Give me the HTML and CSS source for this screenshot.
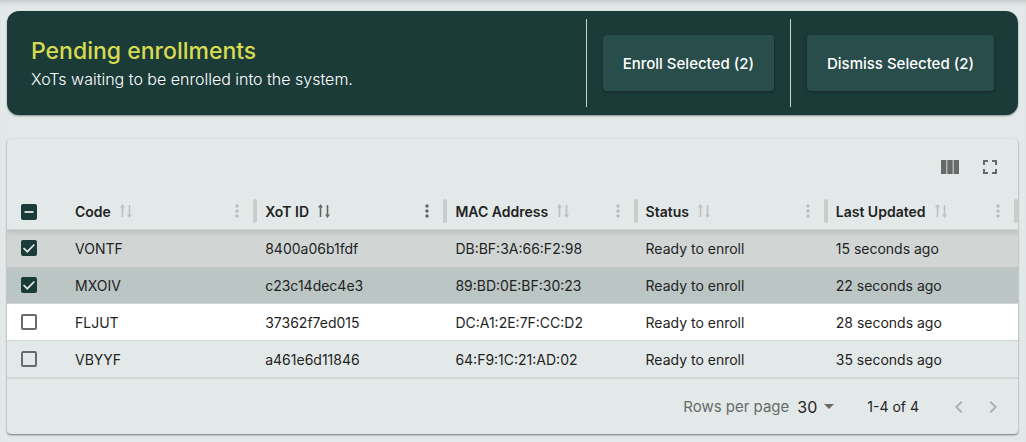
FILE: index.html
```html
<!DOCTYPE html>
<html lang="en">
<head>
  <meta charset="UTF-8">
  <meta name="viewport" content="width=device-width, initial-scale=1">
  <title>Pending enrollments</title>
  <link rel="stylesheet" href="styles.css">
</head>
<body>

  <!-- Shared icons -->
  <svg class="sprite" aria-hidden="true">
    <symbol id="sort" viewBox="0 0 16 16">
      <path d="M4.5 14V3M11.5 2v11" fill="none" stroke="currentColor" stroke-width="1.6"/>
      <path d="M4.5 1L7 4.5H2zM11.5 15L9 11.5h5z" fill="currentColor"/>
    </symbol>
    <symbol id="dots" viewBox="0 0 24 24">
      <path d="M12 8c1.1 0 2-.9 2-2s-.9-2-2-2-2 .9-2 2 .9 2 2 2zm0 2c-1.1 0-2 .9-2 2s.9 2 2 2 2-.9 2-2-.9-2-2-2zm0 6c-1.1 0-2 .9-2 2s.9 2 2 2 2-.9 2-2-.9-2-2-2z" fill="currentColor"/>
    </symbol>
  </svg>

  <header class="banner">
    <div class="banner-text">
      <h1>Pending enrollments</h1>
      <p>XoTs waiting to be enrolled into the system.</p>
    </div>
    <div class="action">
      <button type="button" class="btn">Enroll Selected (2)</button>
    </div>
    <div class="action">
      <button type="button" class="btn">Dismiss Selected (2)</button>
    </div>
  </header>

  <main class="card">
    <div class="toolbar">
      <button type="button" class="icon-btn" aria-label="Show/Hide columns">
        <svg viewBox="0 0 24 24"><path d="M3 5h5.4v14H3zM9.3 5h5.4v14H9.3zM15.6 5H21v14h-5.4z"/></svg>
      </button>
      <button type="button" class="icon-btn" aria-label="Toggle full screen">
        <svg viewBox="0 0 24 24"><path d="M7 14H5v5h5v-2H7v-3zm-2-4h2V7h3V5H5v5zm12 7h-3v2h5v-5h-2v3zM14 5v2h3v3h2V5h-5z"/></svg>
      </button>
    </div>

    <table>
      <thead>
        <tr>
          <th class="check-col"><input type="checkbox" id="selectAll" aria-label="Select all"></th>
          <th>
            <div class="head">Code
              <button type="button" class="sort" aria-label="Sort by Code"><svg><use href="#sort"/></svg></button>
              <button type="button" class="menu" aria-label="Code column actions"><svg><use href="#dots"/></svg></button>
              <span class="handle"></span>
            </div>
          </th>
          <th class="active">
            <div class="head">XoT ID
              <button type="button" class="sort" aria-label="Sort by XoT ID"><svg><use href="#sort"/></svg></button>
              <button type="button" class="menu" aria-label="XoT ID column actions"><svg><use href="#dots"/></svg></button>
              <span class="handle"></span>
            </div>
          </th>
          <th>
            <div class="head">MAC Address
              <button type="button" class="sort" aria-label="Sort by MAC Address"><svg><use href="#sort"/></svg></button>
              <button type="button" class="menu" aria-label="MAC Address column actions"><svg><use href="#dots"/></svg></button>
              <span class="handle"></span>
            </div>
          </th>
          <th>
            <div class="head">Status
              <button type="button" class="sort" aria-label="Sort by Status"><svg><use href="#sort"/></svg></button>
              <button type="button" class="menu" aria-label="Status column actions"><svg><use href="#dots"/></svg></button>
              <span class="handle"></span>
            </div>
          </th>
          <th>
            <div class="head">Last Updated
              <button type="button" class="sort" aria-label="Sort by Last Updated"><svg><use href="#sort"/></svg></button>
              <button type="button" class="menu" aria-label="Last Updated column actions"><svg><use href="#dots"/></svg></button>
              <span class="handle"></span>
            </div>
          </th>
        </tr>
      </thead>
      <tbody>
        <tr class="hovered">
          <td class="check-col"><input type="checkbox" aria-label="Select VONTF" checked></td>
          <td>VONTF</td><td>8400a06b1fdf</td><td>DB:BF:3A:66:F2:98</td><td>Ready to enroll</td><td>15 seconds ago</td>
        </tr>
        <tr class="selected">
          <td class="check-col"><input type="checkbox" aria-label="Select MXOIV" checked></td>
          <td>MXOIV</td><td>c23c14dec4e3</td><td>89:BD:0E:BF:30:23</td><td>Ready to enroll</td><td>22 seconds ago</td>
        </tr>
        <tr class="plain">
          <td class="check-col"><input type="checkbox" aria-label="Select FLJUT"></td>
          <td>FLJUT</td><td>37362f7ed015</td><td>DC:A1:2E:7F:CC:D2</td><td>Ready to enroll</td><td>28 seconds ago</td>
        </tr>
        <tr>
          <td class="check-col"><input type="checkbox" aria-label="Select VBYYF"></td>
          <td>VBYYF</td><td>a461e6d11846</td><td>64:F9:1C:21:AD:02</td><td>Ready to enroll</td><td>35 seconds ago</td>
        </tr>
      </tbody>
    </table>

    <div class="pagination">
      <label for="rows">Rows per page</label>
      <select id="rows">
        <option>10</option>
        <option selected>30</option>
        <option>50</option>
      </select>
      <span class="range">1-4 of 4</span>
      <button type="button" class="page-btn" aria-label="Previous page" disabled>
        <svg viewBox="0 0 24 24"><path d="M15.41 7.41L14 6l-6 6 6 6 1.41-1.41L10.83 12z"/></svg>
      </button>
      <button type="button" class="page-btn" aria-label="Next page" disabled>
        <svg viewBox="0 0 24 24"><path d="M10 6L8.59 7.41 13.17 12l-4.58 4.59L10 18l6-6z"/></svg>
      </button>
    </div>
  </main>

  <script>
    document.getElementById("selectAll").indeterminate = true;
  </script>

</body>
</html>
```
FILE: styles.css
```css
* {
  box-sizing: border-box;
}

body {
  margin: 0;
  padding: 11px 8px 8px 7px;
  font-family: Inter, sans-serif;
  font-size: 14px;
  color: #1f2323;
  background: #e3e9e8;
  box-shadow: inset 0 6px 6px -5px rgba(0,0,0,0.2);
}

button, select {
  font: inherit;
  color: inherit;
  border: none;
  background: none;
  padding: 0;
  cursor: pointer;
}

svg {
  display: block;
  fill: currentColor;
}

.sprite {
  display: none;
}

/* Banner */
.banner {
  display: flex;
  padding: 8px;
  border-radius: 12px;
  background: #1b3b39;
  color: #fff;
  box-shadow: 0 1px 2px rgba(0,0,0,0.4);
}

.banner-text {
  flex: 1;
  padding: 16px;
}

.banner h1 {
  margin: 0;
  font-size: 23px;
  font-weight: 500;
  line-height: 32px;
  color: #d7db4f;
}

.banner p {
  margin: 0;
  font-size: 16px;
  font-weight: 300;
  line-height: 24px;
}

.action {
  padding: 16px;
  border-left: 1px solid #c9d3d1;
}

.btn {
  height: 56px;
  padding: 0 20px;
  border-radius: 4px;
  background: #284d4a;
  color: #fff;
  font-size: 15px;
  font-weight: 500;
  box-shadow: 0 1px 3px rgba(0,0,0,0.4);
}

/* Table card */
.card {
  margin-top: 24px;
  border-radius: 4px;
  overflow: hidden;
  box-shadow: 0 1px 2px rgba(0,0,0,0.5);
}

.toolbar {
  display: flex;
  justify-content: flex-end;
  gap: 16px;
  padding: 16px;
}

.icon-btn {
  color: #666a69;
}

.icon-btn svg {
  width: 24px;
  height: 24px;
}

table {
  width: 100%;
  table-layout: fixed;
  border-collapse: separate;
  border-spacing: 0;
}

thead tr {
  position: relative;
  box-shadow: 0 2px 6px rgba(0,0,0,0.14);
  clip-path: inset(0 0 -8px 0);
  background: #e3e9e8;
}

th {
  height: 35px;
  padding: 4px 0 6px 8px;
  text-align: left;
  font-weight: 600;
  border-bottom: 1px solid #cfd4d3;
}

.head {
  display: flex;
  align-items: center;
  height: 24px;
  white-space: nowrap;
}

.sort {
  margin-left: 7px;
  color: #bcc1c0;
}

.sort svg {
  width: 16px;
  height: 16px;
}

.menu {
  margin-left: auto;
  color: #b8bdbc;
}

.menu svg {
  width: 20px;
  height: 20px;
}

.active .sort,
.active .menu {
  color: #626665;
}

.handle {
  width: 4px;
  height: 24px;
  margin-left: 6px;
  border-radius: 2px;
  background: #c8cdcc;
}

td {
  height: 37px;
  padding: 0 8px;
  border-bottom: 1px solid #d3d8d7;
}

.check-col {
  width: 60px;
  padding: 0 0 0 14px;
  vertical-align: middle;
}

.hovered td {
  background: #d1d6d5;
}

.selected td {
  background: #bac5c4;
}

.plain td {
  background: #fff;
}

input[type="checkbox"] {
  appearance: none;
  display: block;
  width: 16px;
  height: 16px;
  margin: 0;
  border: 2px solid #686b6b;
  border-radius: 2px;
}

input[type="checkbox"]:checked,
input[type="checkbox"]:indeterminate {
  border: none;
  background: #1b3b39 center / 16px no-repeat;
}

input[type="checkbox"]:checked {
  background-image: url("data:image/svg+xml,%3Csvg xmlns='http://www.w3.org/2000/svg' viewBox='0 0 16 16'%3E%3Cpath d='M2.5 8L6.3 11.7L13.3 4.5' fill='none' stroke='%23e3e9e8' stroke-width='1.7'/%3E%3C/svg%3E");
}

input[type="checkbox"]:indeterminate {
  background-image: url("data:image/svg+xml,%3Csvg xmlns='http://www.w3.org/2000/svg' viewBox='0 0 16 16'%3E%3Cpath d='M3.5 8h9' stroke='%23e3e9e8' stroke-width='1.8'/%3E%3C/svg%3E");
}

/* Pagination */
.pagination {
  display: flex;
  align-items: center;
  justify-content: flex-end;
  height: 56px;
  padding: 0 13px;
  border-top: 1px solid #d3d8d7;
}

.pagination label {
  font-size: 15px;
  color: #666b6a;
}

.pagination select {
  appearance: none;
  width: 42px;
  margin-left: 8px;
  font-size: 16px;
  background: url("data:image/svg+xml,%3Csvg xmlns='http://www.w3.org/2000/svg' viewBox='0 0 10 5'%3E%3Cpath d='M0 0h10L5 5z' fill='%23666a69'/%3E%3C/svg%3E") right 5px center / 10px 5px no-repeat;
}

.range {
  margin: 0 28px;
}

.page-btn {
  color: #adb2b1;
}

.page-btn + .page-btn {
  margin-left: 10px;
}

.page-btn svg {
  width: 24px;
  height: 24px;
}
```
